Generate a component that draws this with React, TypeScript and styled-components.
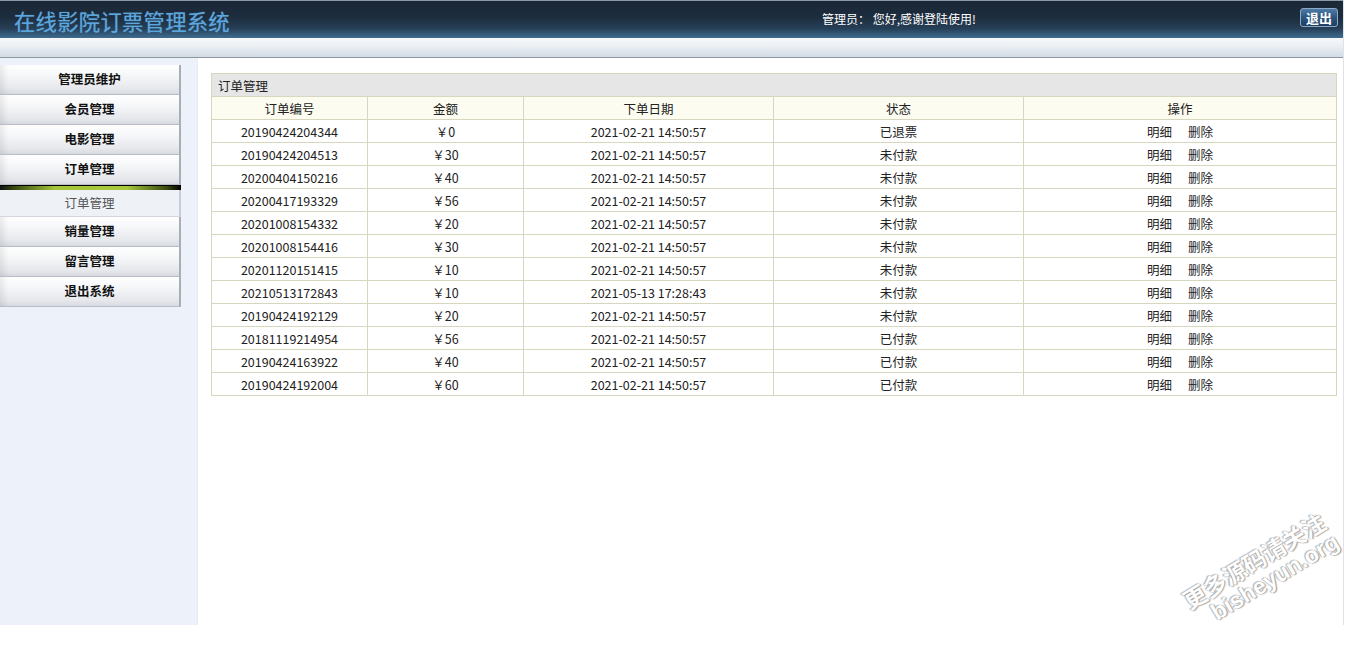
import React from 'react';
import styled, { createGlobalStyle } from 'styled-components';

const GlobalStyle = createGlobalStyle`
  html, body {
    margin: 0;
    padding: 0;
    background: #ffffff;
    font-family: "Noto Sans CJK SC", "Noto Sans", sans-serif;
    font-size: 12px;
    color: #222;
  }
`;

const S = {
  Page: styled.div`
    position: relative;
    width: 1350px;
    height: 663px;
    overflow: hidden;
    background: #fff;
  `,
  Frame: styled.div`
    width: 1343px;
    border-right: 1px solid #dfe3e8;
  `,
  Header: styled.div`
    height: 38px;
    display: flex;
    align-items: center;
    padding: 0 12px 0 14px;
    border-top: 1px solid #8c98a4;
    box-sizing: border-box;
    background: linear-gradient(to bottom, #1a2736 0%, #1d2d3e 45%, #264058 75%, #3f6d90 100%);
  `,
  Title: styled.div`
    font-size: 21.3px;
    letter-spacing: 0.3px;
    color: #5aa6de;
    text-shadow: 0 0 1px rgba(120, 190, 240, 0.6);
    flex: 1;
    margin-top: 2px;
  `,
  Welcome: styled.div`
    color: #fff;
    font-size: 12px;
    margin-right: 324px;
    margin-top: -2px;
  `,
  Logout: styled.button`
    width: 38px;
    height: 19px;
    padding: 0;
    border: 1px solid #8fa8c2;
    border-radius: 3px;
    background: linear-gradient(to bottom, #4d7aa6 0%, #2b5680 50%, #1b3f63 100%);
    color: #fff;
    font-family: "Noto Sans CJK SC", sans-serif;
    font-size: 13px;
    font-weight: bold;
    line-height: 16px;
    margin-top: -4px;
    margin-right: -7px;
  `,
  SubBar: styled.div`
    height: 19px;
    background: linear-gradient(to bottom, #f7f8fa 0%, #e9edf2 50%, #d2dae3 100%);
    border-bottom: 1px solid #8c97a3;
  `,
  Body: styled.div`
    display: flex;
    height: 567px;
  `,
  Side: styled.div`
    width: 199px;
    background: #edf1fa;
    padding-top: 7px;
    box-sizing: border-box;
    border-right: 1px solid #e6ebf4;
  `,
  Menu: styled.div`
    width: 181px;
    display: flex;
    flex-direction: column;
  `,
  MenuBtn: styled.div`
    height: 29px;
    line-height: 28px;
    text-align: center;
    font-weight: bold;
    font-size: 12.5px;
    color: #111;
    border-right: 2px solid #a9aeb6;
    border-bottom: 1px solid #b8bdc6;
    background: linear-gradient(to bottom, #ffffff 0%, #f6f7f9 35%, #e6e8ec 80%, #d8dbe1 100%);
    box-shadow: inset 8px 0 6px -4px rgba(0, 0, 0, 0.08);
  `,
  Divider: styled.div`
    height: 4px;
    background: linear-gradient(to right, #111 0%, #3a4a10 8%, #a4c43a 30%, #a8c83c 70%, #3a4a10 92%, #000 100%);
    border-top: 1px solid #000;
  `,
  SubItem: styled.div`
    height: 26px;
    line-height: 26px;
    text-align: center;
    color: #555;
    font-size: 12.5px;
    background: #eef1f6;
    border-right: 2px solid #c8ccd4;
    border-bottom: 1px solid #d4d8de;
  `,
  Content: styled.div`
    flex: 1;
    background: #fff;
    padding: 15px 6px 0 13px;
  `,
  Table: styled.table`
    width: 1126px;
    border-collapse: collapse;
    table-layout: fixed;
    font-size: 12.5px;
    color: #222;
  `,
  Caption: styled.th`
    height: 22px;
    background: #e6e6e6;
    text-align: left;
    font-weight: normal;
    padding: 0 0 0 6px;
    border: 1px solid #d7d7bf;
  `,
  Head: styled.th`
    height: 22px;
    background: #fcfcf0;
    font-weight: normal;
    padding: 0;
    border: 1px solid #d7d7bf;
  `,
  Cell: styled.td`
    height: 22px;
    padding: 0;
    text-align: center;
    border: 1px solid #d7d7bf;
  `,
  Link: styled.span`
    margin: 0 8px;
    color: #222;
  `,
  Watermark: styled.div`
    position: absolute;
    left: 1180px;
    top: 594px;
    transform: rotate(-31deg);
    transform-origin: left top;
    font-family: "Liberation Sans", "Noto Sans CJK SC", sans-serif;
    font-weight: bold;
    color: #fff;
    text-shadow: 0 0 1px #999, 1px 1px 1px #aaa, -1px -1px 1px #bbb;
    line-height: 1.02;
    white-space: nowrap;
  `,
  WmTop: styled.div`
    font-size: 23px;
  `,
  WmBottom: styled.div`
    font-size: 23px;
    margin-left: 18px;
  `,
};

const orders: [string, string, string, string][] = [
  ['20190424204344', '0', '2021-02-21 14:50:57', '已退票'],
  ['20190424204513', '30', '2021-02-21 14:50:57', '未付款'],
  ['20200404150216', '40', '2021-02-21 14:50:57', '未付款'],
  ['20200417193329', '56', '2021-02-21 14:50:57', '未付款'],
  ['20201008154332', '20', '2021-02-21 14:50:57', '未付款'],
  ['20201008154416', '30', '2021-02-21 14:50:57', '未付款'],
  ['20201120151415', '10', '2021-02-21 14:50:57', '未付款'],
  ['20210513172843', '10', '2021-05-13 17:28:43', '未付款'],
  ['20190424192129', '20', '2021-02-21 14:50:57', '未付款'],
  ['20181119214954', '56', '2021-02-21 14:50:57', '已付款'],
  ['20190424163922', '40', '2021-02-21 14:50:57', '已付款'],
  ['20190424192004', '60', '2021-02-21 14:50:57', '已付款'],
];

const topMenu = ['管理员维护', '会员管理', '电影管理', '订单管理'];
const bottomMenu = ['销量管理', '留言管理', '退出系统'];

export default function App() {
  return (
    <S.Page>
      <GlobalStyle />
      <S.Frame>
        <S.Header>
          <S.Title>在线影院订票管理系统</S.Title>
          <S.Welcome>管理员：&nbsp;您好,感谢登陆使用!</S.Welcome>
          <S.Logout>退出</S.Logout>
        </S.Header>
        <S.SubBar />
        <S.Body>
          <S.Side>
            <S.Menu>
              {topMenu.map((m) => (
                <S.MenuBtn key={m}>{m}</S.MenuBtn>
              ))}
              <S.Divider />
              <S.SubItem>订单管理</S.SubItem>
              {bottomMenu.map((m) => (
                <S.MenuBtn key={m}>{m}</S.MenuBtn>
              ))}
            </S.Menu>
          </S.Side>
          <S.Content>
            <S.Table>
              <colgroup>
                <col style={{ width: 156 }} />
                <col style={{ width: 156 }} />
                <col style={{ width: 250 }} />
                <col style={{ width: 250 }} />
                <col />
              </colgroup>
              <thead>
                <tr>
                  <S.Caption colSpan={5}>订单管理</S.Caption>
                </tr>
                <tr>
                  <S.Head>订单编号</S.Head>
                  <S.Head>金额</S.Head>
                  <S.Head>下单日期</S.Head>
                  <S.Head>状态</S.Head>
                  <S.Head>操作</S.Head>
                </tr>
              </thead>
              <tbody>
                {orders.map(([id, amount, date, status]) => (
                  <tr key={id}>
                    <S.Cell>{id}</S.Cell>
                    <S.Cell>￥{amount}</S.Cell>
                    <S.Cell>{date}</S.Cell>
                    <S.Cell>{status}</S.Cell>
                    <S.Cell>
                      <S.Link>明细</S.Link>
                      <S.Link>删除</S.Link>
                    </S.Cell>
                  </tr>
                ))}
              </tbody>
            </S.Table>
          </S.Content>
        </S.Body>
      </S.Frame>
      <S.Watermark>
        <S.WmTop>更多源码请关注</S.WmTop>
        <S.WmBottom>bisheyun.org</S.WmBottom>
      </S.Watermark>
    </S.Page>
  );
}
